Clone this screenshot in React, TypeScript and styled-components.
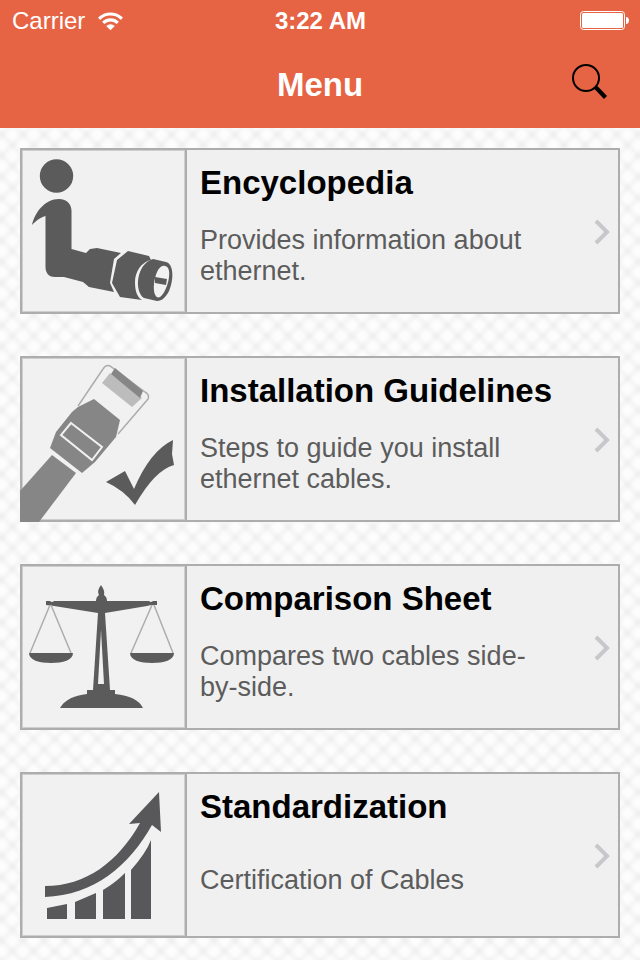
import React from 'react';
import styled, { createGlobalStyle } from 'styled-components';

const ink = '#5b5b5b';
const frame = '#adadad';

const weave = (angle: number) => `repeating-linear-gradient(
  ${angle}deg,
  rgba(0, 0, 0, 0.03) 0,
  rgba(0, 0, 0, 0.02) 2px,
  transparent 5px 10px,
  rgba(0, 0, 0, 0.02) 13px,
  rgba(0, 0, 0, 0.03) 15px
)`;

const GlobalStyle = createGlobalStyle`
  *, *::before, *::after { box-sizing: border-box; }
  body {
    margin: 0;
    min-height: 100vh;
    font-family: "Liberation Sans", Arial, Helvetica, sans-serif;
    color: #000;
    background-color: #fdfdfd;
    background-image: ${weave(45)}, ${weave(-45)};
  }
`;

const Header = styled.header`
  background: #e66344;
  color: #fff;
`;

const StatusBar = styled.div`
  display: grid;
  grid-template-columns: 1fr auto 1fr;
  align-items: center;
  height: 40px;
  padding: 2px 11px 0 12px;
  font-size: 24px;
  line-height: 28px;
`;

const Carrier = styled.div`
  display: flex;
  align-items: center;
  gap: 13px;
`;

const Clock = styled.time`
  font-weight: 700;
`;

const BatterySlot = styled.div`
  display: flex;
  justify-content: flex-end;
`;

const NavBar = styled.div`
  display: grid;
  grid-template-columns: 1fr auto 1fr;
  align-items: center;
  height: 88px;
  padding: 2px 32px 0;
`;

const PageTitle = styled.h1`
  grid-column: 2;
  margin: 0;
  font-size: 33px;
  line-height: 40px;
`;

const SearchButton = styled.button`
  justify-self: end;
  display: flex;
  padding: 0 0 6px;
  border: 0;
  background: none;
  color: #000;
  cursor: pointer;
`;

const MenuList = styled.ul`
  display: flex;
  flex-direction: column;
  gap: 42px;
  margin: 0;
  padding: 20px 20px 22px;
  list-style: none;
`;

const Card = styled.a`
  display: flex;
  min-height: 166px;
  border: 2px solid ${frame};
  background: #f0f0f0;
  color: inherit;
  text-decoration: none;
`;

const Thumb = styled.div`
  flex: none;
  width: 165px;
  border-right: 2px solid ${frame};

  svg {
    display: block;
    margin: -2px;
  }
`;

const CardBody = styled.div`
  flex: 1;
  min-width: 0;
  display: flex;
  align-items: center;
  gap: 44px;
  padding: 2px 8px 0 13px;
`;

const CardText = styled.div`
  flex: 1;
  min-width: 0;
  align-self: stretch;
  display: flex;
  flex-direction: column;
  padding: 11px 0 3px;
`;

const CardTitle = styled.h2`
  margin: 0;
  font-size: 33px;
  line-height: 40px;
  white-space: nowrap;
`;

const CardDescription = styled.p`
  flex: 1;
  display: flex;
  align-items: center;
  margin: 0;
  font-size: 27px;
  line-height: 31px;
  color: #5c5c5c;
`;

const WifiIcon = () => (
  <svg width="25" height="19" viewBox="0 0 25 19" fill="#fff" aria-hidden="true">
    <path d="M0 5.6a17.6 17.6 0 0 1 25 0l-2.2 2.3a14.5 14.5 0 0 0-20.600 0z" />
    <path d="M4.1 9.8a11.900 11.900 0 0 1 16.800 0l-2.2 2.2a8.800 8.800 0 0 0-12.400 0z" />
    <path d="M8.2 13.900a6.100 6.100 0 0 1 8.600 0L12.500 18.300z" />
  </svg>
);

const BatteryIcon = () => (
  <svg width="49" height="20" viewBox="0 0 49 20" role="img" aria-label="Battery full">
    <rect x="0.5" y="0.5" width="44" height="18" rx="3" fill="none" stroke="#fff" />
    <rect x="2" y="2" width="41" height="15" rx="1.5" fill="#fff" />
    <path d="M46 6c4 0 4 7 0 7z" fill="#fff" />
  </svg>
);

const SearchIcon = () => (
  <svg width="36" height="36" viewBox="0 0 36 36" fill="none" stroke="currentColor" aria-hidden="true">
    <circle cx="14" cy="14" r="13" strokeWidth="2" />
    <path d="M23 23l2 1.500L33.500 33.500" strokeWidth="4.200" />
  </svg>
);

const ChevronIcon = () => (
  <svg width="16" height="26" viewBox="0 0 16 26" fill="none" stroke="#c7c7cc" strokeWidth="4" aria-hidden="true">
    <path d="M2 2l11 11L2 24" />
  </svg>
);

const Drawing = ({ children }: { children: React.ReactNode }) => (
  <svg width="166" height="166" viewBox="0 0 166 166" fill={ink} aria-hidden="true">
    <rect x="2.500" y="2.500" width="162" height="161" fill="#f1f1f1" stroke="#cfcfcf" />
    {children}
  </svg>
);

const CableInfoDrawing = () => (
  <Drawing>
    <circle cx="36.500" cy="28" r="16.700" />
    <path d="M12 77C15 64 25 51 39 51C47 51 51.500 56 51.500 63V101L66 105L70 101L77 100L101 105L94 111L90 135L94 144L69 139L63 134L44 129H35C28 129 25.500 124 25.500 119V68C19 70 16 73 12 77z" />
    <path d="M108 103L129 108L131 112C121 114 115 124 115 134C115 143 117 149 122 152L100 149L92 135L97 112z" />
    <path fillRule="evenodd" d="M133 111L146 114C154 116 154 132 149 143C146 149 142 153 137 153L124 150C114 144 116 116 133 111zM145 118C139 116 135 127 134 136C133 145 136 151 140 149C147 145 154 119 145 118z" />
    <path d="M135 129L147 131L146 137L135 135z" />
  </Drawing>
);

const InstallDrawing = () => (
  <Drawing>
    <path d="M58 50L83 13Q86 8 90 10L125 36Q130 39 128 43L98 78" fill="none" stroke="#adadad" strokeWidth="1.500" />
    <path d="M90 17L122 42L112 51L82 27z" fill="#bcbcbc" />
    <path d="M95 12L123 35L120 42L91 18z" fill="#868686" />
    <path d="M58 51L74 43L100 64L96 81L75 106L62 117L30 92L36 76L52 56z" fill="#868686" />
    <path d="M51 67L82 91L72 104L41 79z" fill="none" stroke="#f0f0f0" strokeWidth="2" />
    <path d="M32 99L56 117L19 166H0V135z" fill="#868686" />
    <path d="M86 126L105 115L114 133Q130 95 153 84L152 98L154 109Q135 114 115 149Q104 134 86 126z" />
  </Drawing>
);

const ScalesDrawing = () => (
  <Drawing>
    <path d="M81 21C83 24 85 27 84 31Q87 33 87 37H129Q131 39 133 37H137V41H131L127 42L85 49L90 126H95V130Q117 132 123 144H40Q47 132 67 130V126H73L78 49L34 42L26 41V37H30Q32 39 34 37H76Q76 33 79 31C77 27 79 24 81 21z" />
    <path d="M81 66L84 120H78z" fill="#f0f0f0" />
    <path d="M30 41L10 89M31 41L51 89M132 41L111 89M134 41L153 89" fill="none" stroke="#adadad" strokeWidth="1.500" />
    <path d="M9 89H53C53 96 43 99 31 99S9 96 9 89zM110 89H154C154 96 144 99 132 99S110 96 110 89z" />
  </Drawing>
);

const GrowthDrawing = () => (
  <Drawing>
    <g fill="#58585a">
      <path d="M25 114C66 114 98 90 120 51L109 52L139 20L141 60L132 53C109 94 74 123 25 125z" />
      <path d="M27 136L47 132V147H27zM55 130L76 121V147H55zM83 118Q95 111 105 101V147H83zM111 98Q126 81 131 68V147H111z" />
    </g>
  </Drawing>
);

const menuItems = [
  { id: 'encyclopedia', title: 'Encyclopedia', description: 'Provides information about ethernet.', Picture: CableInfoDrawing },
  { id: 'installation', title: 'Installation Guidelines', description: 'Steps to guide you install ethernet cables.', Picture: InstallDrawing },
  { id: 'comparison', title: 'Comparison Sheet', description: 'Compares two cables side-by-side.', Picture: ScalesDrawing },
  { id: 'standardization', title: 'Standardization', description: 'Certification of Cables', Picture: GrowthDrawing },
];

export default function App() {
  return (
    <>
      <GlobalStyle />
      <Header>
        <StatusBar>
          <Carrier>
            Carrier
            <WifiIcon />
          </Carrier>
          <Clock>3:22 AM</Clock>
          <BatterySlot>
            <BatteryIcon />
          </BatterySlot>
        </StatusBar>
        <NavBar>
          <PageTitle>Menu</PageTitle>
          <SearchButton type="button" aria-label="Search">
            <SearchIcon />
          </SearchButton>
        </NavBar>
      </Header>
      <main>
        <MenuList>
          {menuItems.map(({ id, title, description, Picture }) => (
            <li key={id}>
              <Card href={`#${id}`}>
                <Thumb>
                  <Picture />
                </Thumb>
                <CardBody>
                  <CardText>
                    <CardTitle>{title}</CardTitle>
                    <CardDescription>{description}</CardDescription>
                  </CardText>
                  <ChevronIcon />
                </CardBody>
              </Card>
            </li>
          ))}
        </MenuList>
      </main>
    </>
  );
}
